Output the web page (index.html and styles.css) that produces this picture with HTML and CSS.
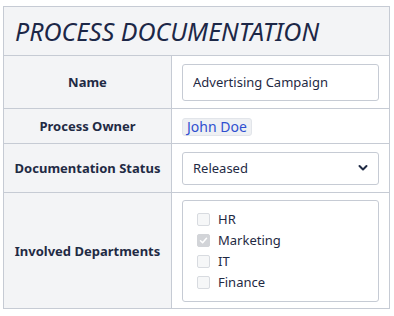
FILE: index.html
```html
<!DOCTYPE html>
<html>
<head>
<meta charset="utf-8">
<link rel="stylesheet" href="styles.css">
</head>
<body>
<table class="doc">
  <colgroup>
    <col class="col-label">
    <col class="col-value">
  </colgroup>
  <tr>
    <th class="title" colspan="2">PROCESS DOCUMENTATION</th>
  </tr>
  <tr class="row-name">
    <th class="label">Name</th>
    <td class="value"><input class="field" type="text" value="Advertising Campaign"></td>
  </tr>
  <tr class="row-owner">
    <th class="label">Process Owner</th>
    <td class="value"><span class="badge">John Doe</span></td>
  </tr>
  <tr class="row-status">
    <th class="label">Documentation Status</th>
    <td class="value">
      <div class="select">
        <span>Released</span>
        <svg class="chev" width="10" height="8" viewBox="0 0 10 8"><path d="M1.5 2 L5 5.5 L8.5 2" fill="none" stroke="#1f2a44" stroke-width="2" stroke-linecap="round" stroke-linejoin="round"/></svg>
      </div>
    </td>
  </tr>
  <tr class="row-dept">
    <th class="label">Involved Departments</th>
    <td class="value">
      <div class="checks">
        <label class="check"><span class="box"></span>HR</label>
        <label class="check"><span class="box on"><svg width="9" height="9" viewBox="0 0 9 9"><path d="M1.5 4.8 L3.6 6.8 L7.5 2.2" fill="none" stroke="#ffffff" stroke-width="1.5" stroke-linecap="round" stroke-linejoin="round"/></svg></span>Marketing</label>
        <label class="check"><span class="box"></span>IT</label>
        <label class="check"><span class="box"></span>Finance</label>
      </div>
    </td>
  </tr>
</table>
</body>
</html>
```

FILE: styles.css
```css
html, body {
  margin: 0;
  padding: 0;
  background: #ffffff;
}
body {
  padding: 6px 0 0 3px;
  font-family: "Noto Sans", "Open Sans", sans-serif;
  color: #1f2a44;
}
.doc {
  border-collapse: collapse;
  width: 386px;
  table-layout: fixed;
}
.col-label { width: 168px; }
.col-value { width: 218px; }
.doc th, .doc td {
  border: 1px solid #c6cbd4;
  padding: 0;
}
.title {
  height: 48px;
  background: #f3f4f6;
  text-align: left;
  padding-left: 11px !important;
  font-size: 25px;
  font-weight: 400;
  font-style: italic;
  color: #1c2747;
}
.label {
  background: #f3f4f6;
  font-size: 13px;
  font-weight: 700;
  text-align: center;
  color: #1f2a44;
}
.value {
  background: #ffffff;
  padding: 0 10px !important;
}
.row-name { height: 53px; }
.row-owner { height: 35px; }
.row-status { height: 49px; }
.row-dept { height: 116px; }
.field {
  box-sizing: border-box;
  width: 100%;
  height: 37px;
  display: block;
  border: 1px solid #c6cbd4;
  border-radius: 3px;
  padding: 0 10px;
  font-family: inherit;
  font-size: 13px;
  color: #1f2a44;
  outline: none;
}
.badge {
  display: inline-block;
  box-sizing: border-box;
  height: 18px;
  line-height: 16px;
  padding: 0 4px;
  border: 1px solid #e2e5ea;
  border-radius: 3px;
  background: #eef0f3;
  color: #2f4fd0;
  font-size: 14px;
}
.select {
  box-sizing: border-box;
  height: 33px;
  border: 1px solid #c6cbd4;
  border-radius: 3px;
  display: flex;
  align-items: center;
  justify-content: space-between;
  padding: 0 10px 0 10px;
  font-size: 13px;
  color: #1f2a44;
}
.checks {
  box-sizing: border-box;
  height: 102px;
  border: 1px solid #c6cbd4;
  border-radius: 3px;
  padding: 8px 14px;
  display: flex;
  flex-direction: column;
}
.check {
  display: flex;
  align-items: center;
  height: 21px;
  font-size: 13px;
  color: #1f2a44;
}
.box {
  box-sizing: border-box;
  width: 13px;
  height: 13px;
  border: 1px solid #d8dbe0;
  border-radius: 2px;
  background: #f6f7f8;
  margin-right: 8px;
  display: flex;
  align-items: center;
  justify-content: center;
}
.box.on {
  background: #d2d4d8;
  border-color: #d2d4d8;
}
```
